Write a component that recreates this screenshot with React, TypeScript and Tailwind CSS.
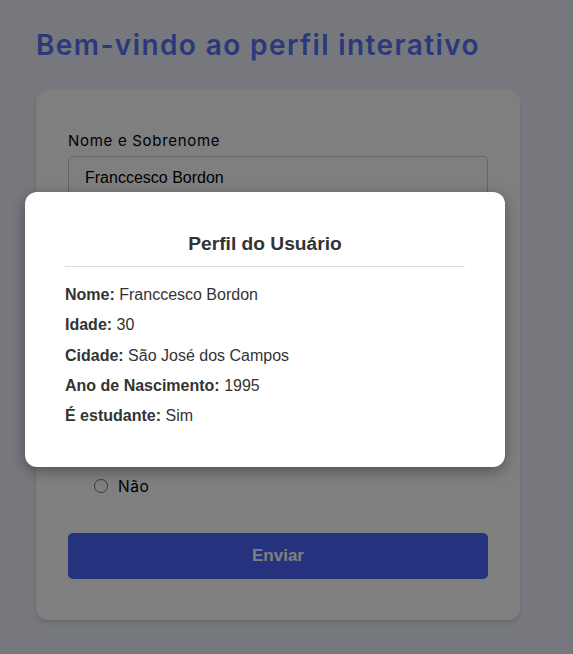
export default function App() {
  return (
    <main className="relative min-h-screen bg-[#ecf1fd] px-9 pt-[25px] pb-8 font-['Inter',sans-serif]">
      <h1 className="text-[28px] font-semibold leading-10 tracking-[1.4px] text-[#5670f8]">
        Bem-vindo ao perfil interativo
      </h1>

      {/* Form card */}
      <form className="mt-[25px] w-[484px] rounded-xl bg-white px-8 pt-[42px] pb-[41px] shadow-md">
        <Field label="Nome e Sobrenome" value="Franccesco Bordon" />
        <Field label="Idade" value="30" />
        <Field label="Cidade" value="São José dos Campos" />

        <p className="mt-1 text-[15px] tracking-[0.6px] text-black">Você é estudante?</p>
        <div className="mt-[27px] flex flex-col gap-[6px] pl-[26px]">
          <label className="flex items-center gap-[10px] text-[15.5px] tracking-[0.6px] text-black">
            <input type="radio" name="estudante" defaultChecked className="h-[14px] w-[14px] accent-[#4a66fc]" />
            Sim
          </label>
          <label className="flex items-center gap-[10px] text-[15.5px] tracking-[0.6px] text-black">
            <input type="radio" name="estudante" className="h-[14px] w-[14px]" />
            Não
          </label>
        </div>

        <button
          type="button"
          className="mt-[35px] h-[46px] w-full rounded-[5px] bg-[#4a66fc] font-['Liberation_Sans',sans-serif] text-[17px] font-bold text-white"
        >
          Enviar
        </button>
      </form>

      {/* Overlay */}
      <div className="absolute inset-0 bg-black/50" />

      {/* Modal */}
      <section className="absolute left-[25px] top-[192px] w-[480px] rounded-xl bg-white px-10 pt-10 pb-[41px] font-['Liberation_Sans',sans-serif] text-[#333] shadow-[0_4px_14px_rgba(0,0,0,0.35)]">
        <h2 className="text-center text-[19.2px] font-bold leading-6">Perfil do Usuário</h2>
        <hr className="mt-[10px] border-[#ddd]" />
        <div className="mt-[18px] flex flex-col gap-[10.25px] text-[16px] leading-5">
          <p><b>Nome:</b> Franccesco Bordon</p>
          <p><b>Idade:</b> 30</p>
          <p><b>Cidade:</b> São José dos Campos</p>
          <p><b>Ano de Nascimento:</b> 1995</p>
          <p><b>É estudante:</b> Sim</p>
        </div>
      </section>
    </main>
  );
}

function Field({ label, value }: { label: string; value: string }) {
  return (
    <div className="mb-5">
      <label className="block text-[15px] leading-[18px] tracking-[0.7px] text-black">{label}</label>
      <input
        readOnly
        value={value}
        className="mt-[6px] h-[44px] w-full rounded-[5px] border border-[#ccc] px-4 font-['Liberation_Sans',sans-serif] text-[16px] text-black"
      />
    </div>
  );
}
